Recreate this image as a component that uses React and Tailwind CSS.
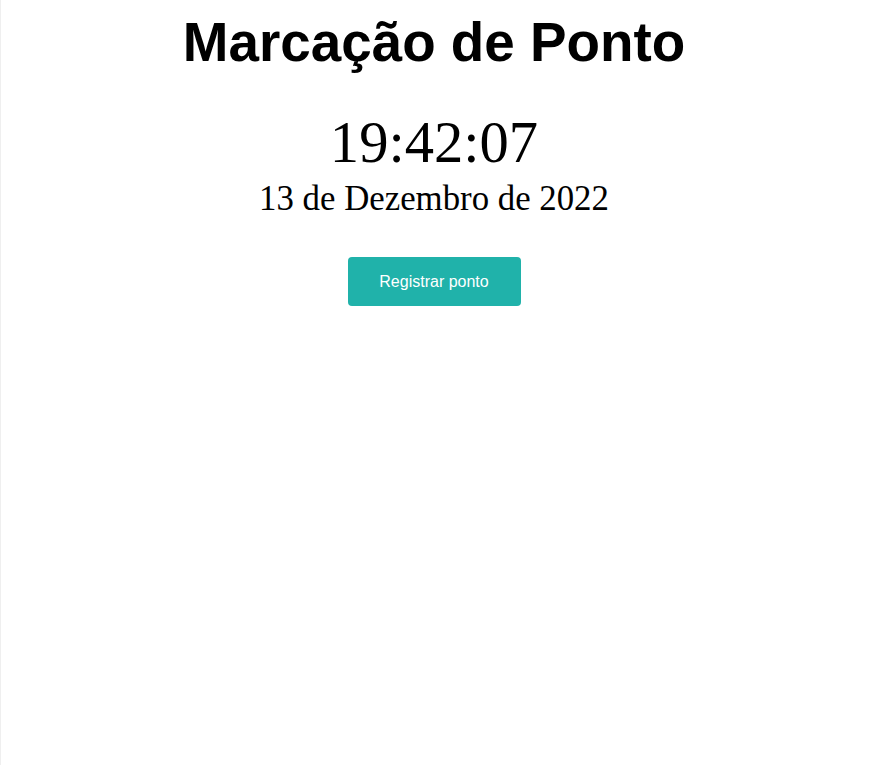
export default function App() {
  return (
    <div className="min-h-[765px] w-full bg-white border-l border-[#efefef]">
      <div className="w-[866px] flex flex-col items-center pt-[15px]">
        <h1 className="text-[54.8px] leading-[55px] font-bold text-black [font-family:'Liberation_Sans',Arial,sans-serif]">
          Marcação de Ponto
        </h1>
        <div className="mt-[44px] text-[58.6px] leading-[58px] text-black [font-family:'Liberation_Serif','Times_New_Roman',serif]">
          19:42:07
        </div>
        <div className="mt-[10px] text-[34.8px] leading-[34.5px] text-black [font-family:'Liberation_Serif','Times_New_Roman',serif]">
          13 de Dezembro de 2022
        </div>
        <button className="mt-[40px] w-[173px] h-[49px] pt-[2px] rounded-[4px] bg-[#20b2aa] text-white text-[16px] [font-family:'Liberation_Sans',Arial,sans-serif]">
          Registrar ponto
        </button>
      </div>
    </div>
  );
}
